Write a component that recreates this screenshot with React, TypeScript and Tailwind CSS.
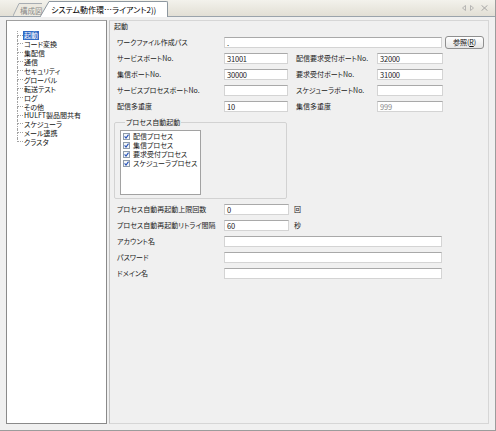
import clsx from "clsx";

const treeItems = [
  "起動",
  "コード変換",
  "集配信",
  "通信",
  "セキュリティ",
  "グローバル",
  "転送テスト",
  "ログ",
  "その他",
  "HULFT製品間共有",
  "スケジューラ",
  "メール連携",
  "クラスタ",
];

const processes = ["配信プロセス", "集信プロセス", "要求受付プロセス", "スケジューラプロセス"];

function Field({ value, width, dim }: { value?: string; width: string; dim?: boolean }) {
  return (
    <div
      className={clsx(
        "flex h-[11px] shrink-0 items-center border border-[#d4d4d4] border-t-[#a9a9a9] bg-white pl-[2px] text-[7.5px] tracking-[-0.2px]",
        width,
        dim ? "text-[#8a8a8a]" : "text-[#222]",
      )}
    >
      {value}
    </div>
  );
}

function Label({ children, width = "w-[107px]" }: { children: React.ReactNode; width?: string }) {
  return <div className={clsx("shrink-0 whitespace-nowrap", width)}>{children}</div>;
}

function CheckBox() {
  return (
    <svg width="7" height="7" viewBox="0 0 7 7" className="shrink-0">
      <rect x="0.5" y="0.5" width="6" height="6" fill="#f4f6f8" stroke="#8f9cab" />
      <path d="M1.6 3.4 L3 5 L5.5 1.6" fill="none" stroke="#2450b8" strokeWidth="1.1" />
    </svg>
  );
}

export default function App() {
  return (
    <div className="flex h-[431px] w-[496px] flex-col overflow-hidden border-r border-b border-[#9c9c9c] bg-[#f0f0f0] font-['Noto_Sans_CJK_JP',sans-serif] text-[7px] leading-[9px] text-[#1a1a1a] [font-feature-settings:'palt']">
      {/* tab strip */}
      <div className="flex h-[17px] shrink-0 items-end border-b border-[#9aa3ab] bg-linear-to-b from-[#f3f2ec] to-[#e2dfd5] pl-[13px]">
        <div className="flex h-[13px] items-stretch text-[#8a8a8a]">
          <svg width="7" height="13" viewBox="0 0 7 13" className="shrink-0">
            <path d="M0 13 L6 0.5 L7 0.5 L7 13 Z" fill="#ece9e0" />
            <path d="M0 13 L6 0.5 L7 0.5" fill="none" stroke="#a7adb3" />
          </svg>
          <div className="flex w-[22px] items-center border-t border-[#a7adb3] bg-[#ece9e0] pt-[1px] text-[7.5px] whitespace-nowrap">
            構成図
          </div>
        </div>
        <div className="relative z-10 -mb-px ml-[-2px] flex h-[16px] items-stretch">
          <svg width="10" height="16" viewBox="0 0 10 16" className="shrink-0">
            <path d="M0 16 L9 0.5 L10 0.5 L10 16 Z" fill="#ffffff" />
            <path d="M0 16 L9 0.5 L10 0.5" fill="none" stroke="#8d979f" />
          </svg>
          <div className="flex w-[118px] items-center rounded-tr-[2px] border-t border-r border-[#8d979f] bg-white pl-[1px] text-[8px] whitespace-nowrap text-black">
            システム動作環…ライアント2))
          </div>
        </div>
        <div className="flex-1" />
        <div className="mr-[7px] mb-[5px] flex items-center gap-[4px]">
          <svg width="4" height="6" viewBox="0 0 4 6">
            <path d="M3.5 0.5 L0.5 3 L3.5 5.5 Z" fill="none" stroke="#a8a8a8" strokeWidth="0.8" />
          </svg>
          <svg width="4" height="6" viewBox="0 0 4 6">
            <path d="M0.5 0.5 L3.5 3 L0.5 5.5 Z" fill="none" stroke="#a8a8a8" strokeWidth="0.8" />
          </svg>
          <svg width="7" height="6" viewBox="0 0 7 6" className="ml-[3px]">
            <path d="M0.5 0.3 L6.5 5.7 M6.5 0.3 L0.5 5.7" stroke="#a0a0a0" strokeWidth="0.9" />
          </svg>
        </div>
      </div>

      {/* body */}
      <div className="flex min-h-0 flex-1 pt-[3px] pb-[6px]">
        {/* tree */}
        <div className="ml-[6px] w-[101px] shrink-0 border border-[#8a8a8a] border-t-[#a0a0a0] bg-white pt-[10px] pl-[10px]">
          {treeItems.map((item, i) => {
            const last = i === treeItems.length - 1;
            return (
              <div key={item} className="flex h-[8.9px] items-stretch">
                <div className="flex w-[6px] shrink-0 flex-col">
                  <div className="h-[4.5px] border-b border-l border-dotted border-[#a3a3a3]" />
                  <div className={clsx("flex-1", !last && "border-l border-dotted border-[#a3a3a3]")} />
                </div>
                <span
                  className={clsx(
                    "flex items-center px-[1px] leading-[8px] whitespace-nowrap",
                    i === 0 ? "bg-[#316ac5] text-white" : "text-[#111]",
                  )}
                >
                  {item}
                </span>
              </div>
            );
          })}
        </div>

        {/* settings */}
        <div className="ml-[2px] w-[380px] shrink-0 border border-[#d6d6d6] border-l-[#c4c4c4] pt-[1px] pl-[4px]">
          <div className="h-[9px]">起動</div>

          <div className="mt-[6px] flex flex-col gap-[5px] pl-[3px]">
            <div className="flex h-[11px] items-center">
              <Label>ワークファイル作成パス</Label>
              <Field value="." width="w-[218px]" />
              <button className="ml-[3px] flex h-[13px] w-[39px] shrink-0 items-center justify-center rounded-[3px] border border-[#8f8f8f] bg-linear-to-b from-white to-[#e6e6e6] text-[7px] text-[#111]">
                参照(<span className="underline">R</span>)
              </button>
            </div>
            <div className="flex h-[11px] items-center">
              <Label>サービスポートNo.</Label>
              <Field value="31001" width="w-[64px]" />
              <Label width="ml-[8px] w-[81px]">配信要求受付ポートNo.</Label>
              <Field value="32000" width="w-[66px]" />
            </div>
            <div className="flex h-[11px] items-center">
              <Label>集信ポートNo.</Label>
              <Field value="30000" width="w-[64px]" />
              <Label width="ml-[8px] w-[81px]">要求受付ポートNo.</Label>
              <Field value="31000" width="w-[66px]" />
            </div>
            <div className="flex h-[11px] items-center">
              <Label>サービスプロセスポートNo.</Label>
              <Field width="w-[64px]" />
              <Label width="ml-[8px] w-[81px]">スケジューラポートNo.</Label>
              <Field width="w-[66px]" />
            </div>
            <div className="flex h-[11px] items-center">
              <Label>配信多重度</Label>
              <Field value="10" width="w-[64px]" />
              <Label width="ml-[8px] w-[81px]">集信多重度</Label>
              <Field value="999" width="w-[66px]" dim />
            </div>
          </div>

          <fieldset className="mt-[6px] w-[173px] rounded-[2px] border border-[#d2d2d2] pr-[4px] pb-[3px] pl-[5px]">
            <legend className="ml-[5px] px-[1px]">プロセス自動起動</legend>
            <div className="mt-[3px] h-[65px] w-[81px] border border-[#a2a2a2] bg-white pt-[1px] pl-[2px]">
              {processes.map((p) => (
                <div key={p} className="flex h-[8.9px] items-center gap-[3px] leading-[8px] whitespace-nowrap">
                  <CheckBox />
                  {p}
                </div>
              ))}
            </div>
          </fieldset>

          <div className="mt-[5px] flex flex-col gap-[5px] pl-[3px]">
            <div className="flex h-[11px] items-center">
              <Label>プロセス自動再起動上限回数</Label>
              <Field value="0" width="w-[65px]" />
              <span className="ml-[5px]">回</span>
            </div>
            <div className="flex h-[11px] items-center">
              <Label>プロセス自動再起動リトライ間隔</Label>
              <Field value="60" width="w-[65px]" />
              <span className="ml-[5px]">秒</span>
            </div>
            <div className="flex h-[11px] items-center">
              <Label>アカウント名</Label>
              <Field width="w-[218px]" />
            </div>
            <div className="flex h-[11px] items-center">
              <Label>パスワード</Label>
              <Field width="w-[218px]" />
            </div>
            <div className="flex h-[11px] items-center">
              <Label>ドメイン名</Label>
              <Field width="w-[218px]" />
            </div>
          </div>
        </div>
      </div>
    </div>
  );
}
